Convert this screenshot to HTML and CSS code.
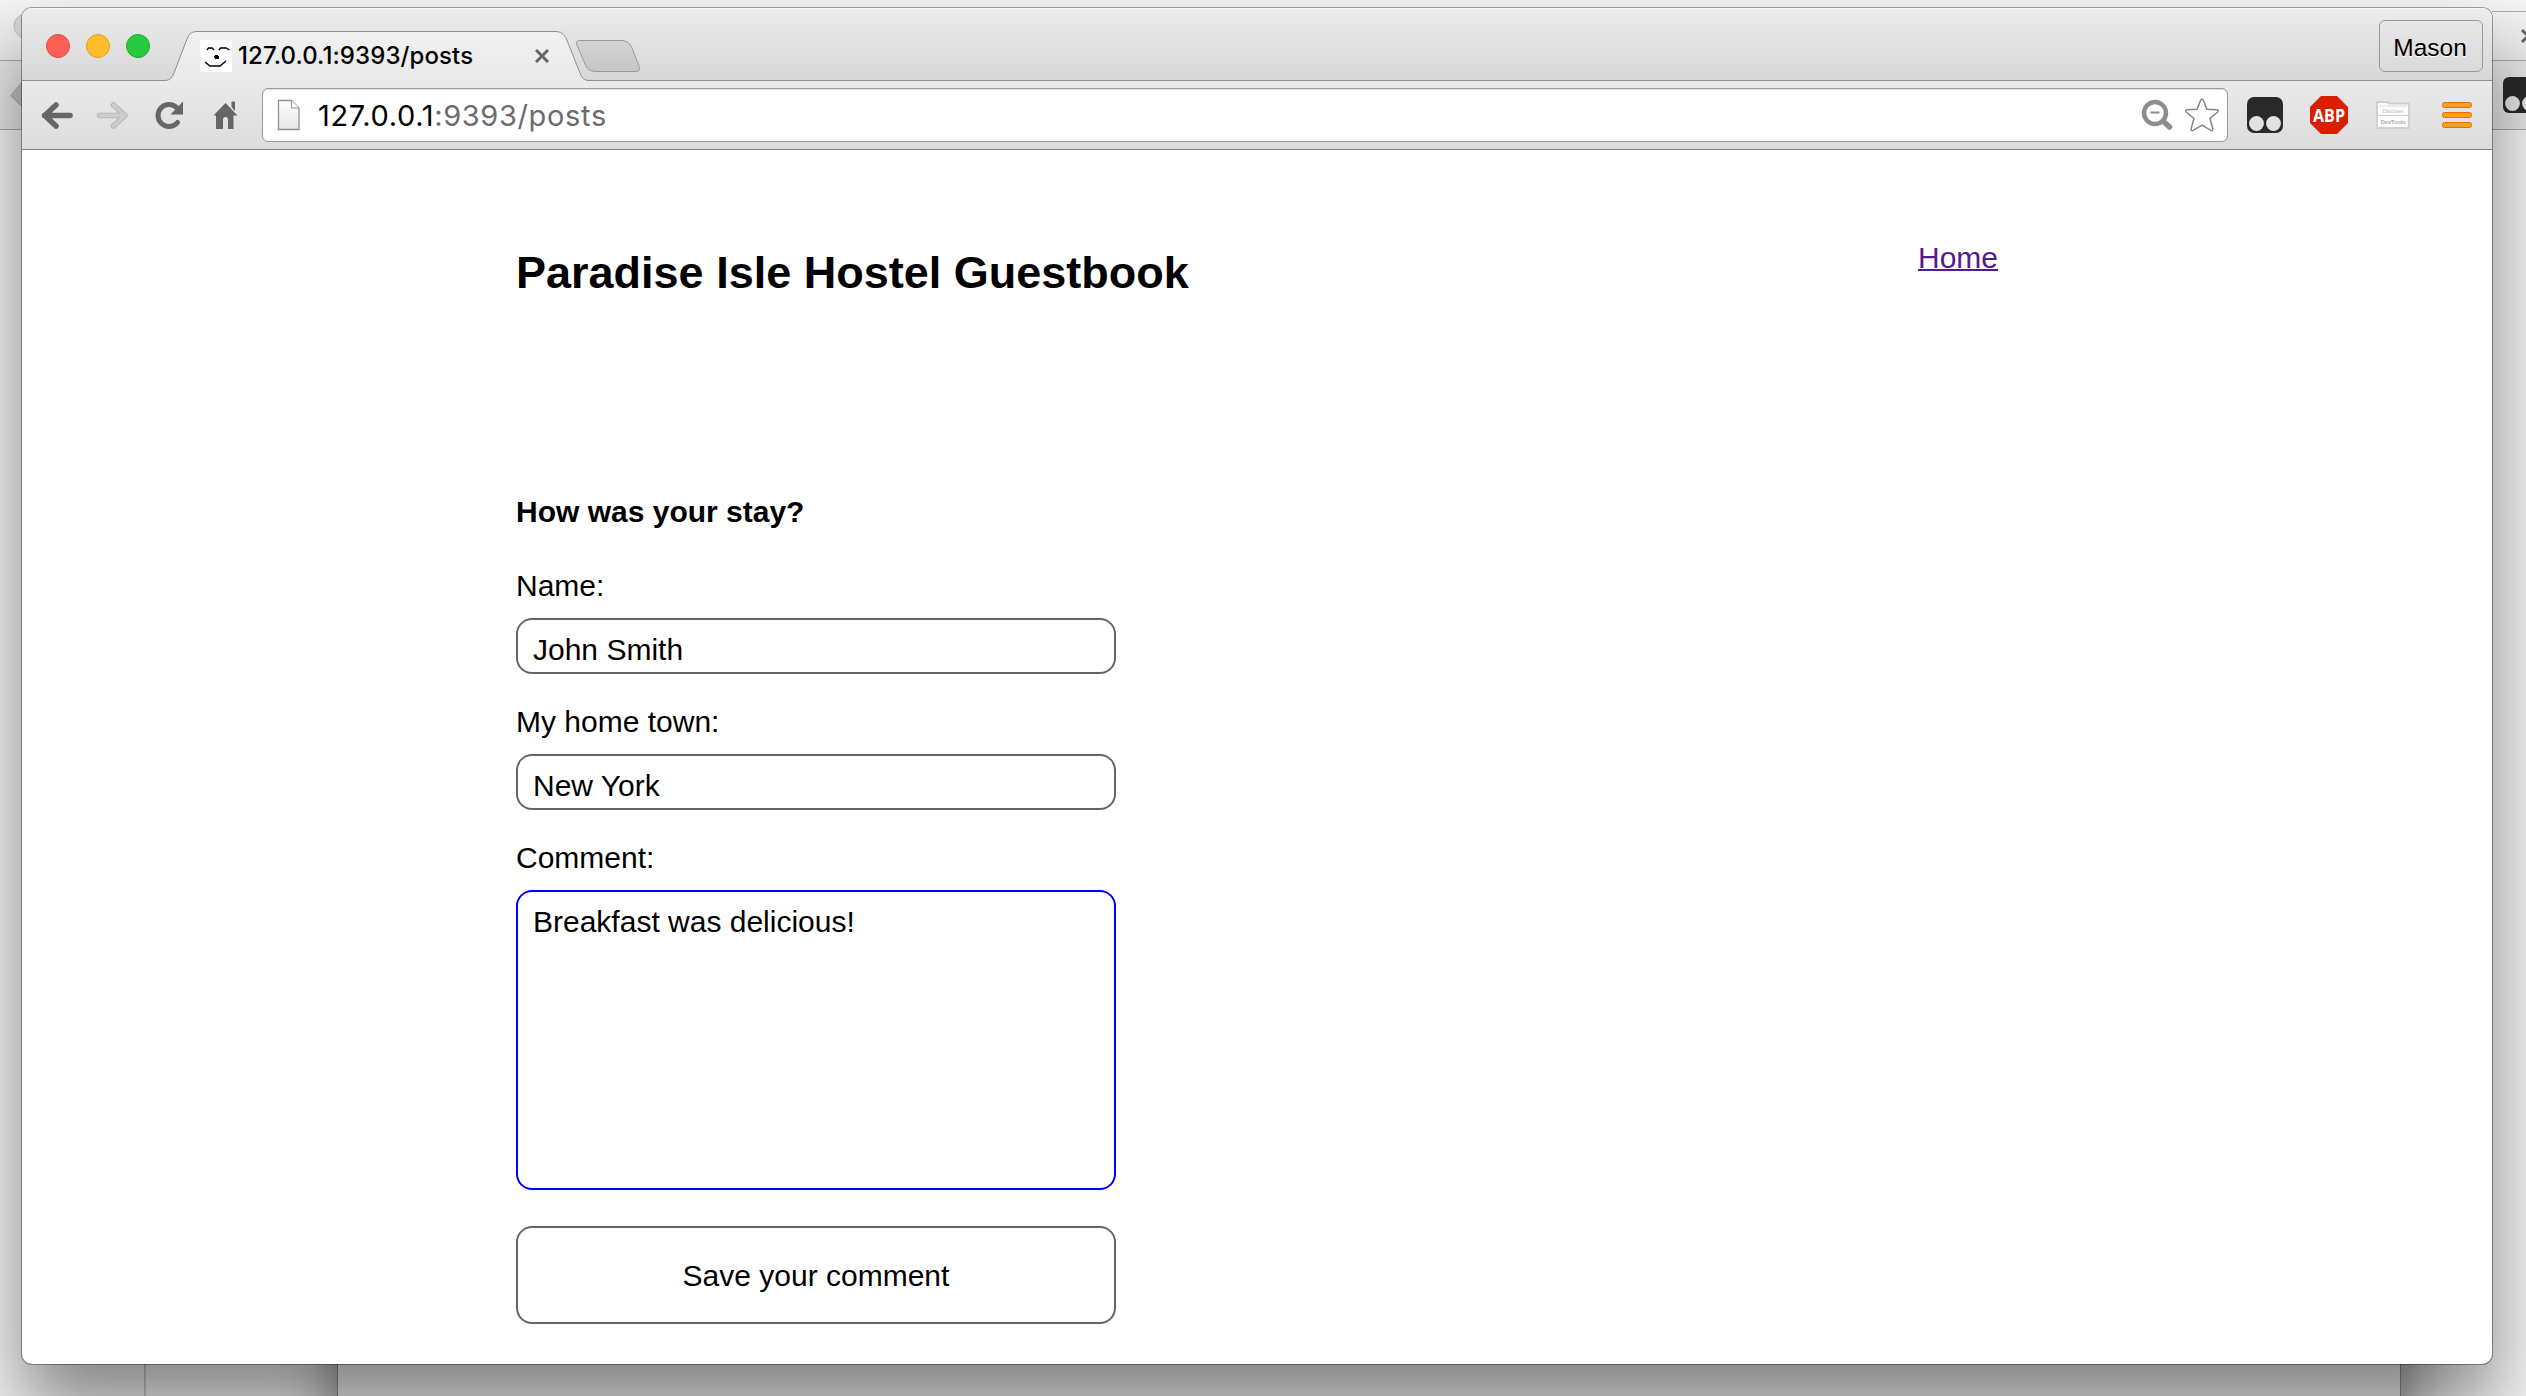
FILE: index.html
```html
<!DOCTYPE html>
<html lang="en">
<head>
<meta charset="utf-8">
<title>127.0.0.1:9393/posts</title>
<link rel="stylesheet" href="styles.css">
</head>
<body>
<div class="desktop">
  <div class="back-window">
    <div class="back-titlebar"></div>
    <div class="back-toolbar"></div>
    <svg class="back-left" viewBox="0 0 22 140" width="22" height="140"><circle cx="26" cy="26" r="12" fill="#d6d6d6" stroke="#bcbcbc"/><path d="M24 80L10.500 95.500L24 109Z" fill="#bdbdbd" stroke="#aaa"/></svg>
    <svg class="back-right" viewBox="0 0 34 140" width="34" height="140"><path d="M0 11.500H34" stroke="#aaa"/><path d="M30 30L42 42M42 30L30 42" stroke="#666" stroke-width="3"/><rect x="11" y="77" width="36" height="36" rx="6" fill="#292929"/><circle cx="20.500" cy="103.500" r="7.400" fill="#e4e4e4"/><circle cx="37.500" cy="103.500" r="7.400" fill="#e4e4e4"/></svg>
  </div>
  <div class="lower-window"></div>
  <div class="divider"></div>

  <main class="window">
    <header class="titlebar">
      <div class="lights"><i class="light red"></i><i class="light amber"></i><i class="light green"></i></div>
      <svg class="tab-shape" viewBox="0 0 490 52" width="490" height="52">
        <defs>
          <linearGradient id="tab" x1="0" y1="0" x2="0" y2="1"><stop offset="0" stop-color="#f1f1f1"/><stop offset="1" stop-color="#e9e9e9"/></linearGradient>
          <linearGradient id="plus" x1="0" y1="0" x2="0" y2="1"><stop offset="0" stop-color="#d4d4d4"/><stop offset="1" stop-color="#c6c6c6"/></linearGradient>
        </defs>
        <path d="M0 52V50.500C5 50.500 7.500 49 10 43L23 9C25.500 3 28 1.500 34 1.500H391C397 1.500 400 4 402.500 9L416 43C418.500 49 420 50.500 426 50.500V52Z" fill="url(#tab)"/>
        <path d="M0 50.500C5 50.500 7.500 49 10 43L23 9C25.500 3 28 1.500 34 1.500H391C397 1.500 400 4 402.500 9L416 43C418.500 49 420 50.500 426 50.500" fill="none" stroke="#8e8e8e"/>
        <path d="M416 10.500H456C462 10.500 465.500 12 468 18L475 36C476 39.500 475.500 41.500 472 41.500H433C427 41.500 424 40 421.500 35L413 15C412 12 412.500 10.500 416 10.500Z" fill="url(#plus)" stroke="#999"/>
      </svg>
      <div class="tab-content">
        <svg class="favicon" viewBox="0 0 32 32" width="32" height="32"><path fill="#fff" d="M0 0h32v32H0z"/><path d="M7 10L8.500 8H12L14 10M19 10L20.500 8H26L29.500 10M5 22L10 26H20L26 21" fill="none" stroke="#000" stroke-width="1.400"/><path d="M15 15h3v1h1v3h-4v-1h-1v-2h1z"/></svg>
        <span class="tab-title">127.0.0.1:9393/posts</span>
        <svg class="tab-close" viewBox="0 0 14 14" width="14" height="14"><path d="M1 1L13 13M13 1L1 13" stroke="#666" stroke-width="3"/></svg>
      </div>
      <span class="profile">Mason</span>
    </header>

    <nav class="toolbar">
      <svg class="nav-icons" viewBox="0 0 240 68" width="240" height="68">
        <g fill="none" stroke-linecap="round" stroke-linejoin="round">
          <path d="M48 34.500H22.500M34 24L22.800 34.500L34 45" stroke="#666" stroke-width="5.500"/>
          <path d="M77.500 34.500H103M91.500 24L103 34.500L91.500 45" stroke="#b8b8b8" stroke-width="5.500"/>
          <path d="M77.500 34.500H103M91.500 24L103 34.500L91.500 45" stroke="#cdcdcd" stroke-width="3.500"/>
          <path d="M155.500 41.500A11 11 0 1 1 155.500 27.500" stroke="#666" stroke-width="5"/>
        </g>
        <path d="M161 20.500V33.500H148.500Z" fill="#666"/>
        <path d="M203.500 22L215.500 34.500H211.500V48H206V38.500Q206 36 203.500 36Q201 36 201 38.500V48H194V34.500H191.500Z" fill="#666"/>
        <path d="M209.500 20.500H213V30L209.500 26Z" fill="#666"/>
      </svg>
      <div class="address">
        <svg class="page-icon" viewBox="0 0 24 32" width="24" height="32"><defs><linearGradient id="pg" x1="0" y1="0" x2="0" y2="1"><stop offset="0" stop-color="#fff"/><stop offset="1" stop-color="#e4e5e9"/></linearGradient></defs><path d="M1.500 1.500H14.500L22 9V30.500H1.500Z" fill="url(#pg)" stroke="#919191" stroke-width="1.300"/><path d="M14.500 1.500V9H22" fill="#fff" stroke="#919191"/></svg>
        <span class="url"><b>127.0.0.1</b>:9393/posts</span>
        <svg class="zoom-icon" viewBox="0 0 32 32" width="32" height="32"><circle cx="14" cy="14" r="11" fill="#fff" stroke="#8d8d8d" stroke-width="4.400"/><path d="M9.500 13.500H18.500" stroke="#8d8d8d" stroke-width="2"/><path d="M22 22L28.500 28" stroke="#8d8d8d" stroke-width="5.500" stroke-linecap="round"/></svg>
        <svg class="star" viewBox="0 0 36 36" width="36" height="36"><path d="M18 2.200Q19 2.200 19.500 3.500L22.800 12.300L32.800 12.800Q35.500 13.400 33.500 15.200L26 21.500L28.800 31.500Q29.200 34.400 26.700 33.400L18 28.200L9.300 33.400Q6.800 34.400 7.200 31.500L10 21.500L2.500 15.200Q.5 13.400 3.200 12.800L13.200 12.300L16.500 3.500Q17 2.200 18 2.200Z" fill="#fff" stroke="#858585" stroke-width="1.500"/></svg>
      </div>
      <div class="extensions">
        <svg viewBox="0 0 36 36" width="36" height="36"><rect width="36" height="36" rx="7" fill="#292929"/><circle cx="9.500" cy="26.500" r="7.400" fill="#e2e2e2"/><circle cx="26.500" cy="26.500" r="7.400" fill="#e2e2e2"/></svg>
        <svg class="blocker" viewBox="0 0 38 38" width="38" height="38"><path d="M11 0H27L38 11V27L27 38H11L0 27V11Z" fill="#da1f00"/><text x="19" y="26" text-anchor="middle" class="abp" textLength="32" lengthAdjust="spacingAndGlyphs">ABP</text></svg>
        <svg class="devtools" viewBox="0 0 34 28" width="34" height="28"><path d="M1 1H11L13 2.500H33V27H1Z" fill="#fcfcfc" stroke="#d0d0d0" stroke-width="2"/><path d="M3 5H31" stroke="#ddd"/><path d="M2 14.500H32" stroke="#ccc"/><text x="17" y="11.500" class="dev light-text" text-anchor="middle" textLength="21">Discover</text><text x="17" y="22.500" class="dev" text-anchor="middle" textLength="25">DevTools</text></svg>
        <svg class="menu" viewBox="0 0 30 28" width="30" height="28"><g fill="#f9a01f" stroke="#ec6b05"><rect x=".5" y="1.500" width="29" height="5" rx="2"/><rect x=".5" y="11.500" width="29" height="5" rx="2"/><rect x=".5" y="21.500" width="29" height="5" rx="2"/></g></svg>
      </div>
    </nav>

    <section class="page">
      <div class="page-head"><h1>Paradise Isle Hostel Guestbook</h1><a class="home" href="#">Home</a></div>
      <form class="form">
        <h2>How was your stay?</h2>
        <label class="label" for="name">Name:</label>
        <input class="field" id="name" value="John Smith">
        <label class="label" for="town">My home town:</label>
        <input class="field" id="town" value="New York">
        <label class="label" for="comment">Comment:</label>
        <textarea class="field comment" id="comment">Breakfast was delicious!</textarea>
        <button class="save" type="button">Save your comment</button>
      </form>
    </section>
  </main>
</div>
</body>
</html>
```
FILE: styles.css
```css
* { box-sizing: border-box; }
body { margin: 0; font-family: "Liberation Sans", Arial, sans-serif; color: #000; }
svg { display: block; flex: none; }
.desktop { position: relative; width: 2526px; height: 1396px; overflow: hidden; background: #f3f3f3; }

/* windows stacked behind the browser */
.back-window { position: absolute; inset: 0; }
.back-titlebar { height: 61px; background: linear-gradient(#f4f4f4, #e8e8e8); border-bottom: 1px solid #a6a6a6; }
.back-toolbar { height: 69px; background: #e4e4e4; border-bottom: 1px solid #a6a6a6; }
.back-left { position: absolute; left: 0; top: 0; }
.back-right { position: absolute; right: 0; top: 0; }
.lower-window { position: absolute; left: 338px; top: 700px; width: 2062px; height: 800px; background: #efefef; box-shadow: 0 0 0 1px rgba(0,0,0,.25), 0 10px 52px rgba(0,0,0,.5); }
.divider { position: absolute; left: 144px; top: 1300px; width: 2px; height: 96px; background: #c8c8c8; }

.window { position: absolute; left: 22px; top: 8px; width: 2470px; height: 1356px; border-radius: 10px; background: #fff; box-shadow: 0 0 0 1px rgba(0,0,0,.35), 0 46px 76px rgba(0,0,0,.45); display: flex; flex-direction: column; }

.titlebar { height: 73px; flex: none; display: flex; align-items: flex-start; border-radius: 10px 10px 0 0; background: linear-gradient(#ececec, #d7d7d7); border-bottom: 1px solid #8e8e8e; box-shadow: inset 0 1px #f7f7f7; }
.lights { display: flex; gap: 16px; padding: 26px 0 0 24px; width: 142px; }
.light { width: 24px; height: 24px; border-radius: 50%; border: 1px solid; }
.red { background: #ff5f57; border-color: #e2463f; }
.amber { background: #ffbd2e; border-color: #e1a116; }
.green { background: #28ca42; border-color: #12ac28; }
.tab-shape { margin: 22px 0 -2px; }
.tab-content { position: relative; display: flex; align-items: center; width: 356px; height: 32px; margin: 32px 0 0 -454px; }
.tab-title { width: 240px; margin-left: 6px; font: 500 24px/32px Inter, sans-serif; letter-spacing: .1px; white-space: nowrap; }
.tab-close { margin-left: 57px; }
.profile { margin: 12px 9px 0 auto; width: 104px; height: 52px; border: 1px solid #999; border-radius: 6px; font-size: 24.5px; line-height: 53px; padding-right: 2px; text-align: center; text-shadow: 0 1px #fff; }

.toolbar { height: 69px; flex: none; display: flex; align-items: flex-start; background: linear-gradient(#eaeaea, #dcdcdc); border-bottom: 1px solid #7f7f7f; }
.address { width: 1966px; height: 54px; margin-top: 7px; display: flex; align-items: center; background: #fff; border: 1px solid #999; border-radius: 6px; box-shadow: inset 0 1px 1px #ddd; }
.page-icon { margin-left: 14px; }
.url { margin-left: 17px; padding-top: 2px; font: 29px/50px Inter, sans-serif; letter-spacing: .65px; color: #6c6c6c; white-space: nowrap; }
.url b { font-weight: 400; color: #000; }
.zoom-icon { margin-left: auto; }
.star { margin: 0 7px 0 11px; }
.extensions { display: flex; align-items: center; height: 38px; margin: 15px 0 0 19px; }
.blocker { margin: 0 28px 0 27px; }
.menu { margin-left: 32px; }
.abp { font: bold 17px "Open Sans", sans-serif; fill: #fff; }
.dev { font: bold 6px "Liberation Sans", sans-serif; fill: #b0b0b0; }
.light-text { font-weight: 400; fill: #c4c4c4; }

.page { padding: 0 494px; font-size: 30px; }
.page-head { display: flex; justify-content: space-between; align-items: flex-start; height: 330px; padding-top: 91px; }
h1, h2 { margin: 0; font-weight: 700; }
h1 { font-size: 45px; line-height: 64px; }
.home { color: #551a8b; line-height: 34px; text-decoration-thickness: 2px; }
.form { display: flex; flex-direction: column; width: 600px; }
h2 { font-size: 30px; line-height: 40px; margin-top: 12px; }
.label { line-height: 34px; margin: 31px 0 15px; }
h2 + .label { margin-top: 37px; }
.field { font: 30px/34px "Liberation Sans", Arial, sans-serif; color: #000; width: 600px; height: 56px; border: 2px solid #666; border-radius: 16px; padding: 13px 15px 5px; outline: 0; background: #fff; }
.comment { height: 300px; border-color: #00f; resize: none; overflow: hidden; }
.save { width: 600px; height: 98px; margin-top: 36px; padding: 2px 0 0; border: 2px solid #666; border-radius: 16px; background: #fff; font: 30px/34px "Liberation Sans", Arial, sans-serif; color: #000; }
```
